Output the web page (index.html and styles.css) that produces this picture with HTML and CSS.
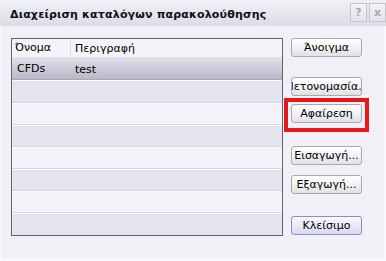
FILE: index.html
```html
<!DOCTYPE html>
<html lang="el">

<head>
    <meta charset="UTF-8">
    <meta name="viewport" content="width=device-width, initial-scale=1.0">
    <title>Διαχείριση καταλόγων παρακολούθησης</title>
    <link rel="stylesheet" href="styles.css">
</head>

<body>
    <div class="dialog">
        <div class="titlebar">
            <span class="title">Διαχείριση καταλόγων παρακολούθησης</span>
            <div class="title-btns">
                <span class="tbtn">?</span>
                <span class="tbtn">x</span>
            </div>
        </div>

        <div class="content">
            <div class="list">
                <div class="list-head">
                    <div class="col col-name">Όνομα</div>
                    <div class="col col-desc">Περιγραφή</div>
                </div>
                <div class="row selected">
                    <div class="col col-name">CFDs</div>
                    <div class="col col-desc">test</div>
                </div>
                <div class="row dark first"></div>
                <div class="row"></div>
                <div class="row dark"></div>
                <div class="row"></div>
                <div class="row dark"></div>
                <div class="row"></div>
                <div class="row dark"></div>
            </div>

            <div class="actions">
                <button class="btn">Άνοιγμα</button>
                <button class="btn gap-a">Μετονομασία...</button>
                <button class="btn gap-b marked">Αφαίρεση</button>
                <button class="btn gap-c">Εισαγωγή...</button>
                <button class="btn gap-d">Εξαγωγή...</button>
                <button class="btn gap-e default">Κλείσιμο</button>
            </div>
        </div>
    </div>
</body>

</html>
```

FILE: styles.css
```css
body {
    margin: 0;
    padding: 0;
    background-color: #f8f8fc;
    font-family: 'DejaVu Sans', Verdana, sans-serif;
    font-size: 11px;
    color: #000;
}

.dialog {
    width: 386px;
    height: 261px;
    overflow: hidden;
}

/* Title bar */
.titlebar {
    height: 26px;
    display: flex;
    align-items: center;
    justify-content: space-between;
    padding-left: 10px;
    padding-right: 0;
    box-sizing: border-box;
    background: linear-gradient(#f0f0f6, #dcdce6);
}

.title {
    font-weight: bold;
    font-size: 11px;
    letter-spacing: 0.17px;
    color: #101018;
    padding-top: 2px;
}

.title-btns {
    display: flex;
    gap: 2px;
    align-self: flex-start;
    margin-top: 3px;
}

.tbtn {
    width: 17px;
    height: 19px;
    box-sizing: border-box;
    border: 1px solid #c4c4cc;
    background: linear-gradient(#f4f4f8, #e2e2ea);
    color: #a8a8b0;
    font-weight: bold;
    font-size: 11px;
    display: flex;
    align-items: center;
    justify-content: center;
}

/* Main area */
.content {
    display: flex;
    margin: 0 2px;
    height: 232px;
    padding: 12px 0 0 9px;
    box-sizing: border-box;
    background-color: #f0f0f6;
}

.list {
    width: 272px;
    height: 198px;
    box-sizing: border-box;
    border: 1px solid #646468;
    background-color: #f2f2f8;
    display: flex;
    flex-direction: column;
}

.list-head {
    height: 18px;
    display: flex;
    align-items: center;
    background-color: #f4f4f8;
}

.list-head .col-name {
    padding-left: 3px;
    border-right: 1px solid #d8d8e0;
}

.col {
    white-space: nowrap;
}

.col-name {
    width: 59px;
    box-sizing: border-box;
    line-height: 14px;
}

.col-desc {
    padding-left: 4px;
}

.row {
    height: 22px;
    box-sizing: border-box;
    display: flex;
    align-items: center;
    background-color: #f2f2f8;
    border-bottom: 1px solid #d6d6de;
    border-top: 1px solid #fafafe;
}

.row.dark {
    background-color: #e4e4ee;
}

.row.first {
    height: 23px;
}

.row.selected {
    height: 23px;
    padding-top: 2px;
    background: linear-gradient(#e2e2ec, #c8c8d6 60%, #b8b8c8);
    border-top: none;
    border-bottom: 1px solid #a8a8b8;
}

.row.selected .col-name {
    padding-left: 5px;
}

.row:last-child {
    border-bottom: none;
}

/* Buttons */
.actions {
    display: flex;
    flex-direction: column;
    margin-left: 8px;
}

.btn {
    width: 71px;
    height: 19px;
    padding: 0;
    box-sizing: border-box;
    font-family: 'DejaVu Sans', Verdana, sans-serif;
    font-size: 11px;
    color: #000;
    background: linear-gradient(#ffffff, #f2f2f4 50%, #e0e0e6);
    border: 1px solid #a8a8b2;
    border-radius: 3px;
    display: flex;
    align-items: center;
    justify-content: center;
    white-space: nowrap;
    overflow: hidden;
}

.btn.default {
    border-color: #8c8cc4;
    background: linear-gradient(#f8f8ff, #eaeaf8 50%, #d8d8ee);
}

.gap-a { margin-top: 20px; }
.gap-b { margin-top: 8px; }
.gap-c { margin-top: 23px; }
.gap-d { margin-top: 10px; }
.gap-e { margin-top: 22px; }

/* Red highlight around the remove button */
.marked {
    position: relative;
    overflow: visible;
}

.marked::after {
    content: '';
    position: absolute;
    left: -8px;
    right: -8px;
    top: -7px;
    bottom: -10px;
    border: 4px solid #e8161e;
}
```
